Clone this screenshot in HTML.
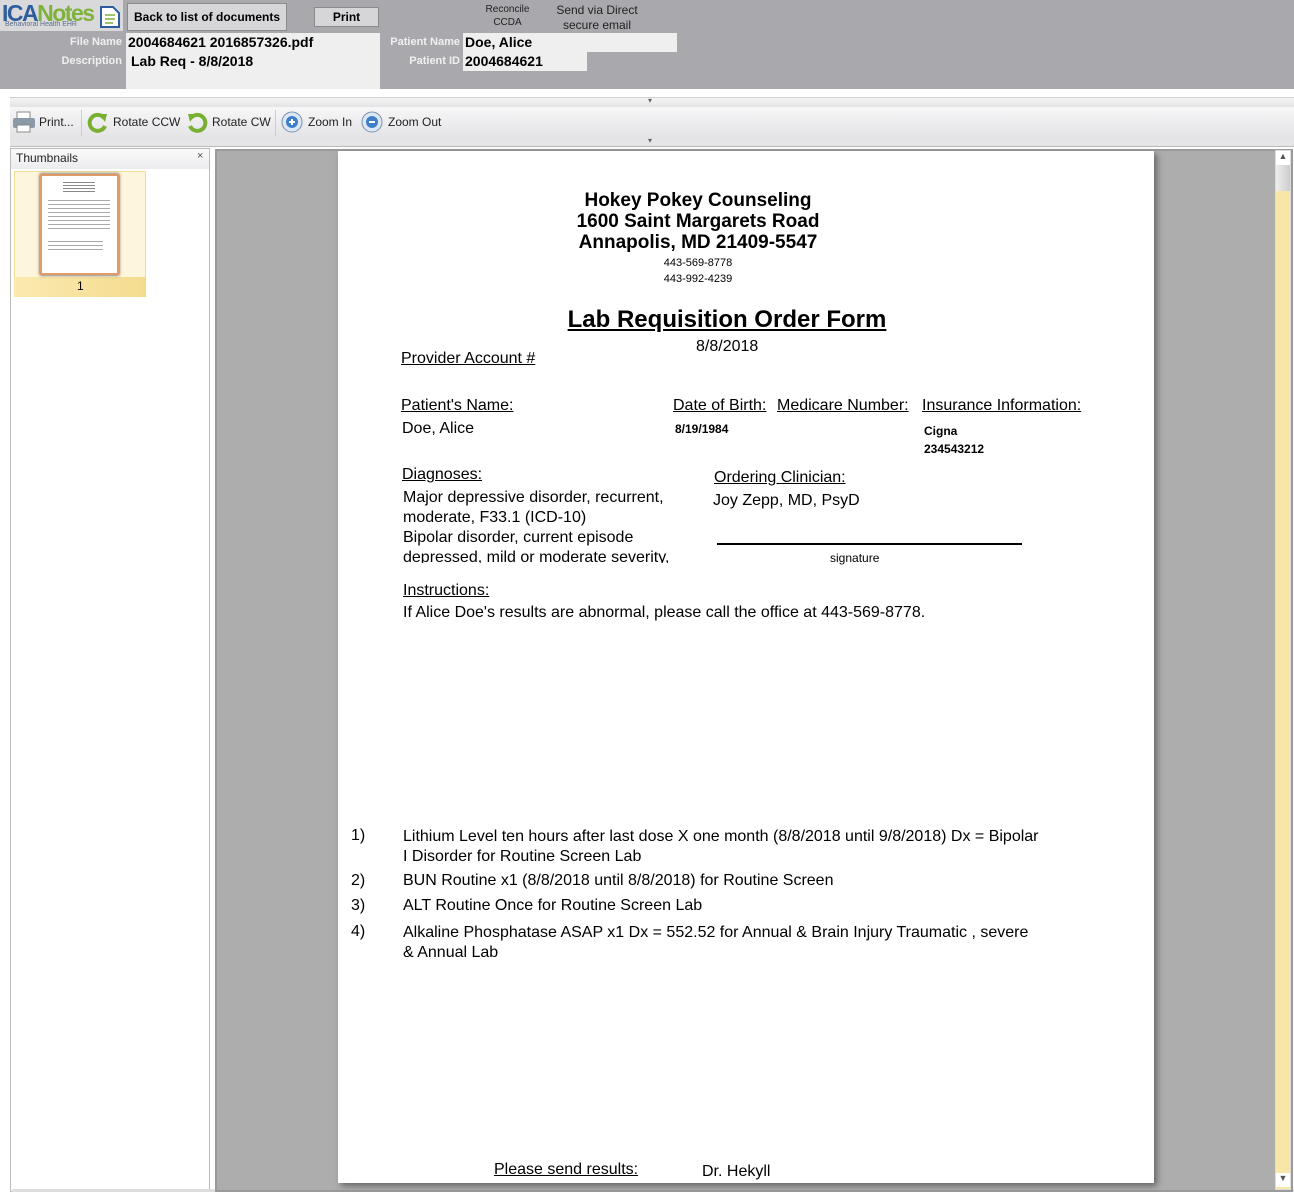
<!DOCTYPE html>
<html><head><meta charset="utf-8"><style>
*{margin:0;padding:0;box-sizing:border-box}
body{width:1294px;height:1192px;position:relative;overflow:hidden;background:#fff;font-family:"Liberation Sans",Arial,sans-serif;color:#000}
.a{position:absolute;white-space:nowrap}
.hdr{left:0;top:0;width:1294px;height:89px;background:#a9a8ad}
.lbl{color:#f0f0f0;font-size:11px;font-weight:bold;text-align:right}
.fld{background:#efefef}
.btn{background:#d6d6d8;border:1px solid #8a8a8a;font-size:12px;font-weight:bold;text-align:center}
.tb{font-size:12px;color:#222}
.pg{font-size:16px}
u{text-decoration:underline}
</style></head><body>
<div class="a hdr"></div>
<div class="a" style="left:0;top:0;width:123px;height:31px;background:#d9d9db"></div>
<div class="a" style="left:2px;top:0px;font-size:23px;font-weight:bold;letter-spacing:-1.5px;color:#2d5d9c">ICA<span style="color:#7fb23b">Notes</span></div>
<div class="a" style="left:5px;top:21px;font-size:7px;color:#5a6e8c">Behavioral Health EHR</div>
<svg class="a" style="left:98px;top:4px" width="24" height="26"><path d="M3 3 L15 3 L21 9 L21 23 L3 23 Z" fill="#fff" stroke="#2d5d9c" stroke-width="2"/><path d="M7 11h10M7 15h10M7 19h8" stroke="#7fb23b" stroke-width="1.5"/></svg>
<div class="a btn" style="left:127px;top:3px;width:160px;height:28px;line-height:27px">Back to list of documents</div>
<div class="a btn" style="left:314px;top:7px;width:65px;height:20px;line-height:18px">Print</div>
<div class="a" style="left:470px;top:3px;width:75px;font-size:10px;text-align:center;color:#222;line-height:13px;white-space:normal">Reconcile<br>CCDA</div>
<div class="a" style="left:548px;top:3px;width:98px;font-size:12px;text-align:center;color:#222;line-height:15px;white-space:normal">Send via Direct<br>secure email</div>
<div class="a fld" style="left:126px;top:33px;width:254px;height:56px"></div>
<div class="a lbl" style="left:20px;top:36px;width:102px">File Name</div>
<div class="a lbl" style="left:20px;top:55px;width:102px">Description</div>
<div class="a" style="left:128px;top:34px;font-size:14px;font-weight:bold">2004684621 2016857326.pdf</div>
<div class="a" style="left:131px;top:53px;font-size:14px;font-weight:bold">Lab Req - 8/8/2018</div>
<div class="a fld" style="left:463px;top:33px;width:214px;height:19px"></div>
<div class="a fld" style="left:463px;top:52px;width:124px;height:19px"></div>
<div class="a lbl" style="left:360px;top:36px;width:100px">Patient Name</div>
<div class="a lbl" style="left:360px;top:55px;width:100px">Patient ID</div>
<div class="a" style="left:465px;top:34px;font-size:14px;font-weight:bold">Doe, Alice</div>
<div class="a" style="left:465px;top:53px;font-size:14px;font-weight:bold">2004684621</div>

<div class="a" style="left:10px;top:97px;width:1284px;height:10px;background:linear-gradient(#f4f4f4,#e4e4e6);border-top:1px solid #d0d0d0"></div>
<div class="a" style="left:10px;top:107px;width:1284px;height:32px;background:linear-gradient(#f7f7f8,#e3e3e6)"></div>
<div class="a" style="left:10px;top:139px;width:1284px;height:8px;background:#e6e6e8;border-bottom:1px solid #bbb"></div>
<div class="a" style="left:648px;top:96px;font-size:8px;color:#666">▾</div>
<div class="a" style="left:648px;top:136px;font-size:8px;color:#666">▾</div>
<svg class="a" style="left:12px;top:110px" width="24" height="24"><rect x="5" y="2" width="13" height="7" fill="#fff" stroke="#888"/><rect x="1" y="8" width="22" height="10" rx="2" fill="#8a9aa8"/><rect x="5" y="15" width="13" height="7" fill="#fff" stroke="#888"/></svg>
<div class="a tb" style="left:39px;top:115px">Print...</div>
<svg class="a" style="left:86px;top:110px" width="24" height="24"><path d="M18 8 A8 8 0 1 0 19 16" fill="none" stroke="#7ab032" stroke-width="4"/><path d="M13 4 L21 4 L19 12 Z" fill="#7ab032"/></svg>
<div class="a tb" style="left:113px;top:115px">Rotate CCW</div>
<svg class="a" style="left:185px;top:110px" width="24" height="24"><path d="M6 8 A8 8 0 1 1 5 16" fill="none" stroke="#7ab032" stroke-width="4"/><path d="M11 4 L3 4 L5 12 Z" fill="#7ab032"/></svg>
<div class="a tb" style="left:212px;top:115px">Rotate CW</div>
<svg class="a" style="left:280px;top:110px" width="24" height="24"><circle cx="12" cy="12" r="10" fill="#dde8f4" stroke="#7890aa"/><circle cx="12" cy="12" r="6" fill="#3f7fc8"/><path d="M9 12h6M12 9v6" stroke="#fff" stroke-width="2"/></svg>
<div class="a tb" style="left:308px;top:115px">Zoom In</div>
<svg class="a" style="left:360px;top:110px" width="24" height="24"><circle cx="12" cy="12" r="10" fill="#dde8f4" stroke="#7890aa"/><circle cx="12" cy="12" r="6" fill="#3f7fc8"/><path d="M9 12h6" stroke="#fff" stroke-width="2"/></svg>
<div class="a tb" style="left:388px;top:115px">Zoom Out</div>
<div class="a" style="left:81px;top:110px;width:1px;height:26px;background:#ccc"></div>
<div class="a" style="left:275px;top:110px;width:1px;height:26px;background:#ccc"></div>

<div class="a" style="left:10px;top:148px;width:200px;height:1044px;background:#fff;border:1px solid #bbb"></div>
<div class="a" style="left:11px;top:149px;width:198px;height:20px;background:linear-gradient(#fafafa,#ececf0)"></div>
<div class="a" style="left:16px;top:151px;font-size:12px;color:#222">Thumbnails</div>
<div class="a" style="left:197px;top:150px;font-size:11px;color:#555">×</div>
<div class="a" style="left:14px;top:171px;width:132px;height:126px;background:#fdf6dd;border:1px solid #f1dc98"></div>
<div class="a" style="left:14px;top:277px;width:132px;height:20px;background:linear-gradient(90deg,#fbe9b0,#f4dc8e)"></div>
<div class="a" style="left:77px;top:279px;font-size:12px">1</div>
<div class="a" style="left:40px;top:174px;width:79px;height:101px;background:#fff;border:2px solid #e39a6a;box-shadow:0 0 3px #333"></div>
<div class="a" style="left:63px;top:182px;width:32px;height:12px;background:repeating-linear-gradient(#888 0 1px,transparent 1px 3px)"></div>
<div class="a" style="left:48px;top:200px;width:62px;height:30px;background:repeating-linear-gradient(#aaa 0 1px,transparent 1px 4px)"></div>
<div class="a" style="left:48px;top:241px;width:55px;height:12px;background:repeating-linear-gradient(#aaa 0 1px,transparent 1px 4px)"></div>
<div class="a" style="left:12px;top:1189px;width:1282px;height:3px;background:#ddd"></div>

<div class="a" style="left:215px;top:149px;width:1078px;height:1043px;background:#adadad;border:2px solid #9a9a9a"></div>
<div class="a" style="left:338px;top:151px;width:816px;height:1032px;background:#fff;box-shadow:3px 3px 6px #666"></div>
<div class="a" style="left:1275px;top:150px;width:16px;height:1040px;background:#f8e6a8;border:1px solid #ddd"></div>
<div class="a" style="left:1276px;top:151px;width:14px;height:14px;background:#fff;font-size:9px;color:#555;text-align:center">▲</div>
<div class="a" style="left:1276px;top:165px;width:14px;height:26px;background:linear-gradient(90deg,#eee,#ccc)"></div>
<div class="a" style="left:1276px;top:1173px;width:14px;height:14px;background:#fff;font-size:9px;color:#555;text-align:center">▼</div>

<div class="a" style="left:338px;top:190px;width:720px;text-align:center;font-size:19px;font-weight:bold;line-height:21px">Hokey Pokey Counseling<br>1600 Saint Margarets Road<br>Annapolis, MD 21409-5547</div>
<div class="a" style="left:338px;top:255px;width:720px;text-align:center;font-size:11px;line-height:16px">443-569-8778<br>443-992-4239</div>
<div class="a" style="left:338px;top:306px;width:778px;text-align:center;font-size:24px;font-weight:bold"><u>Lab Requisition Order Form</u></div>
<div class="a pg" style="left:696px;top:338px">8/8/2018</div>
<div class="a pg" style="left:401px;top:350px"><u>Provider Account #</u></div>
<div class="a pg" style="left:401px;top:397px"><u>Patient's Name:</u></div>
<div class="a pg" style="left:673px;top:397px"><u>Date of Birth:</u></div>
<div class="a pg" style="left:777px;top:397px"><u>Medicare Number:</u></div>
<div class="a pg" style="left:922px;top:397px"><u>Insurance Information:</u></div>
<div class="a pg" style="left:402px;top:420px">Doe, Alice</div>
<div class="a" style="left:675px;top:422px;font-size:12px;font-weight:bold">8/19/1984</div>
<div class="a" style="left:924px;top:422px;font-size:12px;font-weight:bold;line-height:18px">Cigna<br>234543212</div>
<div class="a pg" style="left:402px;top:466px"><u>Diagnoses:</u></div>
<div class="a pg" style="left:403px;top:488px;line-height:20px;height:75px;overflow:hidden">Major depressive disorder, recurrent,<br>moderate, F33.1 (ICD-10)<br>Bipolar disorder, current episode<br>depressed, mild or moderate severity,</div>
<div class="a pg" style="left:714px;top:469px"><u>Ordering Clinician:</u></div>
<div class="a pg" style="left:713px;top:492px">Joy Zepp, MD, PsyD</div>
<div class="a" style="left:717px;top:543px;width:305px;height:2px;background:#000"></div>
<div class="a" style="left:830px;top:551px;font-size:12px">signature</div>
<div class="a pg" style="left:403px;top:582px"><u>Instructions:</u></div>
<div class="a pg" style="left:403px;top:604px">If Alice Doe's results are abnormal, please call the office at 443-569-8778.</div>
<div class="a pg" style="left:351px;top:827px">1)</div>
<div class="a pg" style="left:403px;top:827px;line-height:20px">Lithium Level ten hours after last dose X one month (8/8/2018 until 9/8/2018) Dx = Bipolar<br>I Disorder for Routine Screen Lab</div>
<div class="a pg" style="left:351px;top:872px">2)</div>
<div class="a pg" style="left:403px;top:872px">BUN Routine x1 (8/8/2018 until 8/8/2018) for Routine Screen</div>
<div class="a pg" style="left:351px;top:897px">3)</div>
<div class="a pg" style="left:403px;top:897px">ALT Routine Once for Routine Screen Lab</div>
<div class="a pg" style="left:351px;top:923px">4)</div>
<div class="a pg" style="left:403px;top:923px;line-height:20px">Alkaline Phosphatase ASAP x1 Dx = 552.52 for Annual &amp; Brain Injury Traumatic , severe<br>&amp; Annual Lab</div>
<div class="a pg" style="left:494px;top:1161px"><u>Please send results:</u></div>
<div class="a pg" style="left:702px;top:1163px">Dr. Hekyll</div>
</body></html>
